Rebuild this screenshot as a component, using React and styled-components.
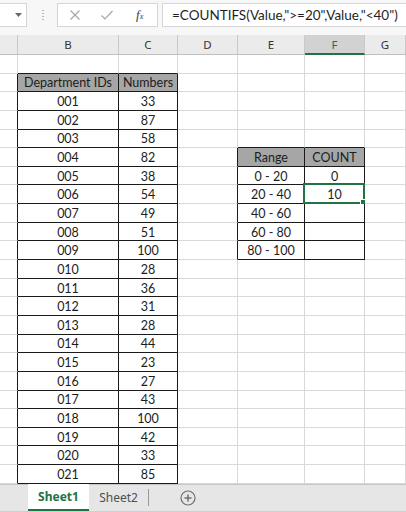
import React from "react";
import styled, { createGlobalStyle } from "styled-components";

const GRID_LINE = "#d9d9d9";
const TABLE_LINE = "#1a1a1a";
const GREEN = "#217346";
const COLS = "18px 101px 59px 60px 67px 60px 1fr";
const COL_NAMES = ["", "B", "C", "D", "E", "F", "G"];
const ROW_COUNT = 23;

const numbers = [33, 87, 58, 82, 38, 54, 49, 51, 100, 28, 36, 31, 28, 44, 23, 27, 43, 100, 42, 33, 85];
const ranges = [
  ["0 - 20", "0"],
  ["20 - 40", "10"],
  ["40 - 60", ""],
  ["60 - 80", ""],
  ["80 - 100", ""],
];

// what sits in a cell, and whether it belongs to one of the bordered tables
const cellAt = (r, c) => {
  if (r === 1 && c === 1) return { text: "Department IDs", head: true };
  if (r === 1 && c === 2) return { text: "Numbers", head: true };
  if (r >= 2 && c === 1) return { text: String(r - 1).padStart(3, "0") };
  if (r >= 2 && c === 2) return { text: String(numbers[r - 2]) };
  if (r === 5 && c === 4) return { text: "Range", head: true };
  if (r === 5 && c === 5) return { text: "COUNT", head: true };
  if (r >= 6 && r <= 10 && c === 4) return { text: ranges[r - 6][0] };
  if (r >= 6 && r <= 10 && c === 5) return { text: ranges[r - 6][1] };
  return null;
};

const inTable = (r, c) => cellAt(r, c) !== null;

const GlobalStyle = createGlobalStyle`
  html, body {
    margin: 0;
    padding: 0;
    background: #ffffff;
  }
`;

const Window = styled.div`
  width: 406px;
  height: 512px;
  overflow: hidden;
  display: flex;
  flex-direction: column;
  background: #ffffff;
  font-family: Lato, "Liberation Sans", sans-serif;
`;

const FormulaBar = styled.div`
  height: 35px;
  flex: none;
  display: flex;
  align-items: flex-start;
  padding-top: 3px;
  box-sizing: border-box;
  background: #f7f7f7;
`;

const NameBox = styled.div`
  width: 27px;
  height: 24px;
  box-sizing: border-box;
  background: #ffffff;
  border: 1px solid #d6d6d6;
  border-left: none;
  display: flex;
  align-items: center;
  justify-content: flex-end;
  padding-right: 4px;
`;

const Grip = styled.div`
  width: 2px;
  height: 12px;
  margin: 6px 13px 0 15px;
  background-image: radial-gradient(circle, #b5b5b5 0.8px, transparent 1px);
  background-size: 2px 3px;
`;

const FxBox = styled.div`
  width: 101px;
  height: 24px;
  box-sizing: border-box;
  background: #ffffff;
  border: 1px solid #d6d6d6;
  display: flex;
  align-items: center;
  padding-left: 11px;
`;

const IconSlot = styled.span`
  width: ${(p) => p.$w}px;
  margin-left: ${(p) => p.$gap || 0}px;
  display: flex;
  align-items: center;
  justify-content: center;
`;

const Fx = styled.span`
  font-family: "Liberation Serif", serif;
  font-style: italic;
  font-size: 13px;
  color: #3c3c3c;
  margin-left: 22px;

  sub {
    font-size: 8px;
    vertical-align: 0;
  }
`;

const FormulaInput = styled.div`
  flex: 1;
  height: 24px;
  margin-left: 4px;
  box-sizing: border-box;
  background: #ffffff;
  border: 1px solid #d6d6d6;
  border-right: none;
  display: flex;
  align-items: center;
  padding-left: 9px;
  font-size: 13.5px;
  color: #1f1f1f;
  white-space: nowrap;
`;

const HeaderRow = styled.div`
  height: 20px;
  flex: none;
  display: grid;
  grid-template-columns: ${COLS};
  background: #ebebeb;
  box-sizing: border-box;
  border-bottom: 1px solid #bfbfbf;
`;

const ColHead = styled.div`
  display: flex;
  align-items: center;
  justify-content: center;
  box-sizing: border-box;
  border-right: 1px solid #c9c9c9;
  font-family: "Noto Sans", "Open Sans", sans-serif;
  font-size: 11.5px;
  color: ${(p) => (p.$active ? GREEN : "#333333")};
  background: ${(p) => (p.$active ? "#d2d2d2" : "transparent")};
  border-bottom: ${(p) => (p.$active ? `2px solid ${GREEN}` : "none")};
  margin-bottom: ${(p) => (p.$active ? "-1px" : "0")};
`;

const Sheet = styled.div`
  flex: 1;
  display: grid;
  grid-template-columns: ${COLS};
  grid-template-rows: repeat(${ROW_COUNT}, 18.65px);
  overflow: hidden;
`;

const Cell = styled.div`
  position: relative;
  box-sizing: border-box;
  display: flex;
  align-items: center;
  justify-content: center;
  padding-top: 1px;
  font-size: 12.5px;
  color: #1c1c1c;
  white-space: nowrap;
  border-right: 1px solid ${(p) => (p.$darkRight ? TABLE_LINE : GRID_LINE)};
  border-bottom: 1px solid ${(p) => (p.$darkBottom ? TABLE_LINE : GRID_LINE)};
  background: ${(p) => (p.$head ? "#a6a6a6" : "#ffffff")};
`;

const Selection = styled.div`
  position: absolute;
  inset: -2px -1px -1px -2px;
  border: 2px solid ${GREEN};
  pointer-events: none;

  &::after {
    content: "";
    position: absolute;
    right: -4px;
    bottom: -4px;
    width: 5px;
    height: 5px;
    background: ${GREEN};
    border: 1px solid #ffffff;
  }
`;

const TabBar = styled.div`
  height: 28px;
  flex: none;
  box-sizing: border-box;
  background: #e6e6e6;
  border-top: 1px solid #c6c6c6;
  border-bottom: 1px solid #cfcfcf;
  display: flex;
  align-items: stretch;
  padding-left: 28px;
`;

const Tab = styled.div`
  width: ${(p) => p.$w}px;
  display: flex;
  align-items: center;
  justify-content: center;
  margin-top: -1px;
  font-family: "Noto Sans", "Open Sans", sans-serif;
  font-size: 12px;
  font-weight: ${(p) => (p.$active ? 700 : 400)};
  color: ${(p) => (p.$active ? GREEN : "#505050")};
  background: ${(p) => (p.$active ? "#ffffff" : "transparent")};
  border-bottom: ${(p) => (p.$active ? `2px solid ${GREEN}` : "none")};
  box-sizing: border-box;
`;

const TabDivider = styled.div`
  width: 1px;
  margin: 4px 0 5px;
  background: #9a9a9a;
`;

const AddSheet = styled.div`
  display: flex;
  align-items: center;
  margin-left: 31px;
`;

const CloseIcon = () => (
  <svg width="12" height="12" viewBox="0 0 12 12">
    <path d="M1.5 1.5 L10.5 10.5 M10.5 1.5 L1.5 10.5" stroke="#a6a6a6" strokeWidth="1.2" fill="none" />
  </svg>
);

const CheckIcon = () => (
  <svg width="14" height="12" viewBox="0 0 14 12">
    <path d="M1.5 6.5 L5 10 L12.5 2" stroke="#a6a6a6" strokeWidth="1.2" fill="none" />
  </svg>
);

const CaretIcon = () => (
  <svg width="7" height="4" viewBox="0 0 7 4">
    <path d="M0 0 H7 L3.5 4 Z" fill="#6a6a6a" />
  </svg>
);

const PlusCircle = () => (
  <svg width="16" height="16" viewBox="0 0 16 16">
    <circle cx="8" cy="8" r="7" stroke="#707070" strokeWidth="1.2" fill="none" />
    <path d="M8 4.5 V11.5 M4.5 8 H11.5" stroke="#707070" strokeWidth="1.5" />
  </svg>
);

const App = () => {
  const cells = [];
  for (let r = 0; r < ROW_COUNT; r++) {
    for (let c = 0; c < COL_NAMES.length; c++) {
      const data = cellAt(r, c);
      const darkRight = inTable(r, c) || inTable(r, c + 1);
      const darkBottom = inTable(r, c) || inTable(r + 1, c);
      cells.push(
        <Cell key={`${r}-${c}`} $darkRight={darkRight} $darkBottom={darkBottom} $head={data && data.head}>
          {data ? data.text : ""}
          {r === 7 && c === 5 && <Selection />}
        </Cell>
      );
    }
  }

  return (
    <Window>
      <GlobalStyle />
      <FormulaBar>
        <NameBox>
          <CaretIcon />
        </NameBox>
        <Grip />
        <FxBox>
          <IconSlot $w={12}>
            <CloseIcon />
          </IconSlot>
          <IconSlot $w={14} $gap={19}>
            <CheckIcon />
          </IconSlot>
          <Fx>
            f<sub>x</sub>
          </Fx>
        </FxBox>
        <FormulaInput>=COUNTIFS(Value,"&gt;=20",Value,"&lt;40")</FormulaInput>
      </FormulaBar>
      <HeaderRow>
        {COL_NAMES.map((name, i) => (
          <ColHead key={i} $active={name === "F"}>
            {name}
          </ColHead>
        ))}
      </HeaderRow>
      <Sheet>{cells}</Sheet>
      <TabBar>
        <Tab $w={61} $active>
          Sheet1
        </Tab>
        <Tab $w={59}>Sheet2</Tab>
        <TabDivider />
        <AddSheet>
          <PlusCircle />
        </AddSheet>
      </TabBar>
    </Window>
  );
};

export default App;
